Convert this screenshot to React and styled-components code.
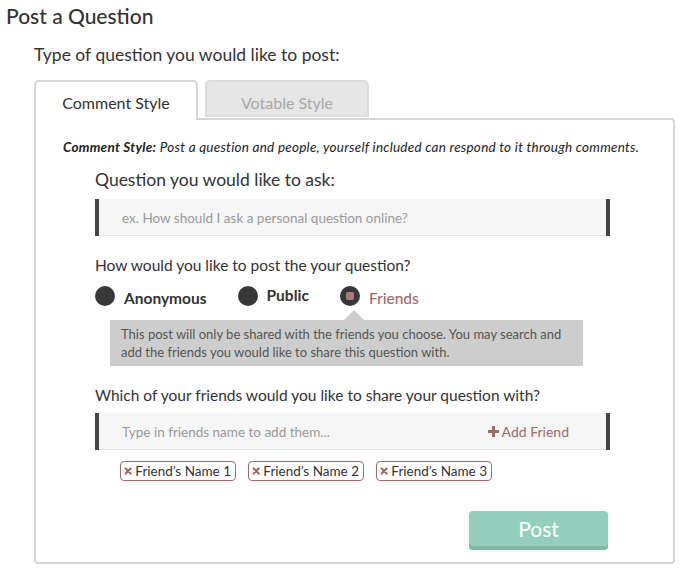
import React from "react";
import styled, {createGlobalStyle} from "styled-components";

const accent = "#a06a6a";

const GlobalStyle = createGlobalStyle`
  body {
    margin: 0;
    background: #fff;
    font-family: Lato, "Open Sans", sans-serif;
    color: #333;
  }
`;

function PlusIcon() {
    return (
        <svg width="11" height="11" viewBox="0 0 11 11">
            <path d="M4 0h3v4h4v3H7v4H4V7H0V4h4z" fill={accent}/>
        </svg>
    );
}

function CrossIcon() {
    return (
        <svg width="10" height="10" viewBox="0 0 10 10">
            <path d="M2 2l6 6M8 2l-6 6" stroke={accent} strokeWidth="2.6" strokeLinecap="round"/>
        </svg>
    );
}

export default function App() {
    const friends = ["Friend’s Name 1", "Friend’s Name 2", "Friend’s Name 3"];

    return (
        <Page>
            <GlobalStyle/>
            <Title>Post a Question</Title>
            <Content>
                <Prompt>Type of question you would like to post:</Prompt>
                <Tabs>
                    <Tab active>Comment Style</Tab>
                    <Tab>Votable Style</Tab>
                </Tabs>
                <Panel>
                    <Description><b>Comment Style:</b> Post a question and people, yourself included can respond to it through comments.</Description>
                    <Form>
                        <Label>Question you would like to ask:</Label>
                        <Field>
                            <Placeholder>ex. How should I ask a personal question online?</Placeholder>
                        </Field>

                        <SmallLabel>How would you like to post the your question?</SmallLabel>
                        <Radios>
                            <Radio>
                                <Dot/>
                                <RadioText>Anonymous</RadioText>
                            </Radio>
                            <Radio>
                                <Dot/>
                                <RadioText raised>Public</RadioText>
                            </Radio>
                            <Radio>
                                <Dot checked/>
                                <RadioText checked>Friends</RadioText>
                            </Radio>
                        </Radios>
                        <Tooltip>
                            This post will only be shared with the friends you choose. You may search and
                            add the friends you would like to share this question with.
                        </Tooltip>

                        <SmallLabel>Which of your friends would you like to share your question with?</SmallLabel>
                        <Field>
                            <Placeholder>Type in friends name to add them...</Placeholder>
                            <AddFriend><PlusIcon/>Add Friend</AddFriend>
                        </Field>
                        <Tags>
                            {friends.map(name => (
                                <Tag key={name}><CrossIcon/>{name}</Tag>
                            ))}
                        </Tags>
                        <Actions>
                            <PostButton>Post</PostButton>
                        </Actions>
                    </Form>
                </Panel>
            </Content>
        </Page>
    );
}

const Page = styled.div`
  width: 685px;
  padding-top: 3px;
`;

const Title = styled.h1`
  margin: 0 0 0 6px;
  font-size: 21px;
  line-height: 26px;
  font-weight: 500;
  color: #333;
`;

const Content = styled.div`
  margin-left: 34px;
  width: 641px;
`;

const Prompt = styled.div`
  margin-top: 15px;
  font-size: 17.5px;
  line-height: 22px;
  color: #333;
`;

const Tabs = styled.div`
  display: flex;
  gap: 7px;
  margin-top: 14px;
  align-items: flex-start;
  position: relative;
  z-index: 1;
`;

const Tab = styled.div`
  width: 164px;
  box-sizing: border-box;
  height: ${p => p.active ? "40px" : "37px"};
  border: 2px solid ${p => p.active ? "#d6d6d6" : "#dcdcdc"};
  border-bottom: ${p => p.active ? "none" : "2px solid #dcdcdc"};
  border-radius: 5px 5px 0 0;
  background: ${p => p.active ? "#fff" : "#e6e6e6"};
  color: ${p => p.active ? "#333" : "#a8a8a8"};
  font-size: 16px;
  display: flex;
  justify-content: center;
  padding-top: 11px;
`;

const Panel = styled.div`
  margin-top: -2px;
  border: 2px solid #d6d6d6;
  border-radius: 0 4px 4px 4px;
  height: 446px;
  box-sizing: border-box;
  padding: 18px 0 0 27px;
`;

const Description = styled.div`
  font-size: 13.5px;
  letter-spacing: 0.25px;
  font-style: italic;
  color: #222;
  line-height: 18px;

  b {
    font-weight: 700;
  }
`;

const Form = styled.div`
  margin-left: 32px;
  width: 515px;
`;

const Label = styled.div`
  margin-top: 13px;
  font-size: 17.5px;
  line-height: 22px;
  color: #333;
`;

const SmallLabel = styled.div`
  margin-top: 19px;
  font-size: 15.5px;
  line-height: 20px;
  color: #333;
`;

const Field = styled.div`
  margin-top: 8px;
  height: 37px;
  box-sizing: border-box;
  background: #f6f6f6;
  border-left: 4px solid #444;
  border-right: 4px solid #444;
  box-shadow: inset 0 -1px 0 #e4e4e4;
  display: flex;
  align-items: center;
  justify-content: space-between;
  padding: 0 37px 0 23px;
`;

const Placeholder = styled.span`
  font-size: 13.5px;
  color: #999;
`;

const AddFriend = styled.span`
  font-size: 14px;
  color: ${accent};
  display: flex;
  align-items: center;
  gap: 3px;
`;

const Radios = styled.div`
  display: flex;
  gap: 31px;
  margin-top: 10px;
  height: 21px;
  align-items: center;
`;

const Radio = styled.div`
  display: flex;
  align-items: center;
  gap: 9px;
`;

const Dot = styled.span`
  width: 20px;
  height: 20px;
  border-radius: 50%;
  background: #383838;
  display: flex;
  align-items: center;
  justify-content: center;

  &::after {
    content: "";
    display: ${p => p.checked ? "block" : "none"};
    width: 8px;
    height: 8px;
    border-radius: 2px;
    background: #b07a7a;
  }
`;

const RadioText = styled.span`
  font-size: 15.5px;
  font-weight: ${p => p.checked ? 500 : 700};
  color: ${p => p.checked ? accent : "#333"};
  position: relative;
  top: ${p => p.raised ? "-1px" : "2px"};
`;

const Tooltip = styled.div`
  position: relative;
  margin: 14px 0 0 15px;
  width: 473px;
  box-sizing: border-box;
  background: #cdcdcd;
  color: #555;
  font-size: 13px;
  line-height: 18px;
  padding: 5px 11px 5px 11px;

  &::before {
    content: "";
    position: absolute;
    top: -10px;
    left: 234px;
    border: 10px solid transparent;
    border-top: none;
    border-bottom-color: #cdcdcd;
  }
`;

const Tags = styled.div`
  display: flex;
  gap: 12px;
  margin: 11px 0 0 25px;
`;

const Tag = styled.span`
  display: flex;
  align-items: center;
  gap: 3px;
  height: 20px;
  box-sizing: border-box;
  padding: 0 4px 0 3px;
  border: 1px solid ${accent};
  border-radius: 4px;
  font-size: 13.5px;
  color: #333;
  width: 116px;
  white-space: nowrap;
`;

const Actions = styled.div`
  display: flex;
  justify-content: flex-end;
  margin: 30px 2px 0 0;
`;

const PostButton = styled.button`
  width: 139px;
  height: 39px;
  border: none;
  border-radius: 4px;
  background: #94cfbd;
  box-shadow: inset 0 -4px 0 #7dbaa8;
  color: #fff;
  font-family: Lato, sans-serif;
  font-size: 21px;
  padding: 0 0 4px;
`;
